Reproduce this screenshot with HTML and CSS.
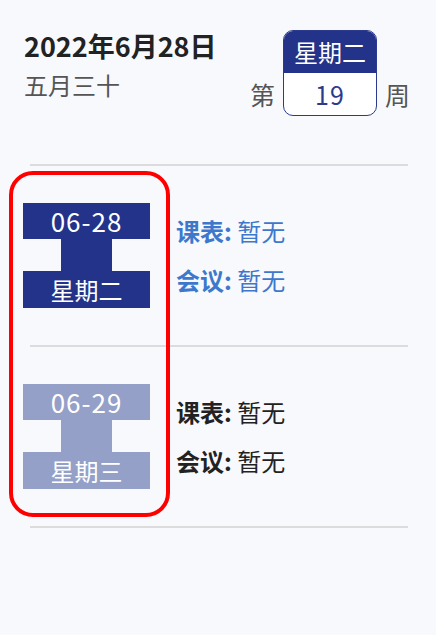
FILE: index.html
```html
<!DOCTYPE html>
<html lang="zh">

<head>
  <meta charset="UTF-8">
  <meta name="viewport" content="width=device-width, initial-scale=1.0">
  <title>日程</title>
  <link rel="stylesheet" href="styles.css">
</head>

<body>

  <div id="page">
    <!-- 顶部日期 -->
    <div class="header">
      <div class="date-info">
        <div class="date-title">2022年6月28日</div>
        <div class="lunar">五月三十</div>
      </div>
      <div class="week">
        <span class="week-label">第</span>
        <div class="week-box">
          <div class="week-day">星期二</div>
          <div class="week-num">19</div>
        </div>
        <span class="week-label">周</span>
      </div>
    </div>

    <div class="divider"></div>

    <div class="day-row">
      <div class="day-tag today">
        <div class="tag-top">06-28</div>
        <div class="tag-neck"></div>
        <div class="tag-bottom">星期二</div>
      </div>
      <div class="day-info today">
        <div><b>课表:</b> 暂无</div>
        <div><b>会议:</b> 暂无</div>
      </div>
    </div>

    <div class="divider"></div>

    <div class="day-row">
      <div class="day-tag">
        <div class="tag-top">06-29</div>
        <div class="tag-neck"></div>
        <div class="tag-bottom">星期三</div>
      </div>
      <div class="day-info">
        <div><b>课表:</b> 暂无</div>
        <div><b>会议:</b> 暂无</div>
      </div>
    </div>

    <div class="divider"></div>

    <!-- 标注框 -->
    <div class="highlight"></div>
  </div>

</body>

</html>
```

FILE: styles.css
```css
body {
  font-family: "Noto Sans CJK SC", "Noto Sans", sans-serif;
  background-color: #f8f9fc;
  margin: 0;
  padding: 0;
}

#page {
  position: relative;
  height: 635px;
}

.header {
  display: flex;
  justify-content: space-between;
  align-items: flex-start;
  padding: 27px 26px 0 24px;
}

.date-title {
  font-size: 27px;
  font-weight: bold;
  color: #222;
  line-height: 38px;
}

.lunar {
  font-size: 24px;
  color: #555;
  line-height: 34px;
  margin-top: 3px;
}

.week {
  display: flex;
  align-items: flex-end;
  gap: 8px;
  margin-top: 3px;
}

.week-label {
  font-size: 25px;
  color: #555;
  line-height: 34px;
  margin-bottom: 5px;
}

.week-box {
  width: 92px;
  height: 84px;
  border: 1px solid #2b3a8c;
  border-radius: 10px;
  overflow: hidden;
  background-color: #fff;
  text-align: center;
}

.week-day {
  height: 42px;
  line-height: 42px;
  background-color: #24338a;
  color: #fff;
  font-size: 24px;
}

.week-num {
  line-height: 42px;
  font-size: 25px;
  color: #2b3a8c;
  letter-spacing: 1px;
}

.divider {
  height: 2px;
  background-color: #dcdcdc;
  margin: 0 28px 0 30px;
}

.header + .divider {
  margin-top: 48px;
}

.day-row {
  display: flex;
  align-items: center;
  gap: 26px;
  height: 179px;
  padding-left: 23px;
}

.day-tag {
  display: flex;
  flex-direction: column;
  align-items: center;
  width: 127px;
  color: #fff;
  text-align: center;
}

.day-tag .tag-top,
.day-tag .tag-bottom,
.day-tag .tag-neck {
  background-color: #94a0c8;
}

.day-tag.today .tag-top,
.day-tag.today .tag-bottom,
.day-tag.today .tag-neck {
  background-color: #24338a;
}

.tag-top {
  width: 100%;
  height: 36px;
  line-height: 36px;
  font-size: 26px;
  letter-spacing: 1px;
}

.tag-neck {
  width: 51px;
  height: 32px;
}

.tag-bottom {
  width: 100%;
  height: 37px;
  line-height: 37px;
  font-size: 24px;
}

.day-info {
  display: flex;
  flex-direction: column;
  gap: 15px;
  font-size: 24px;
  line-height: 34px;
  color: #222;
}

.day-info.today {
  color: #3d78cc;
}

.highlight {
  position: absolute;
  left: 9px;
  top: 171px;
  width: 153px;
  height: 338px;
  border: 4px solid #ff0000;
  border-radius: 24px;
}
```
